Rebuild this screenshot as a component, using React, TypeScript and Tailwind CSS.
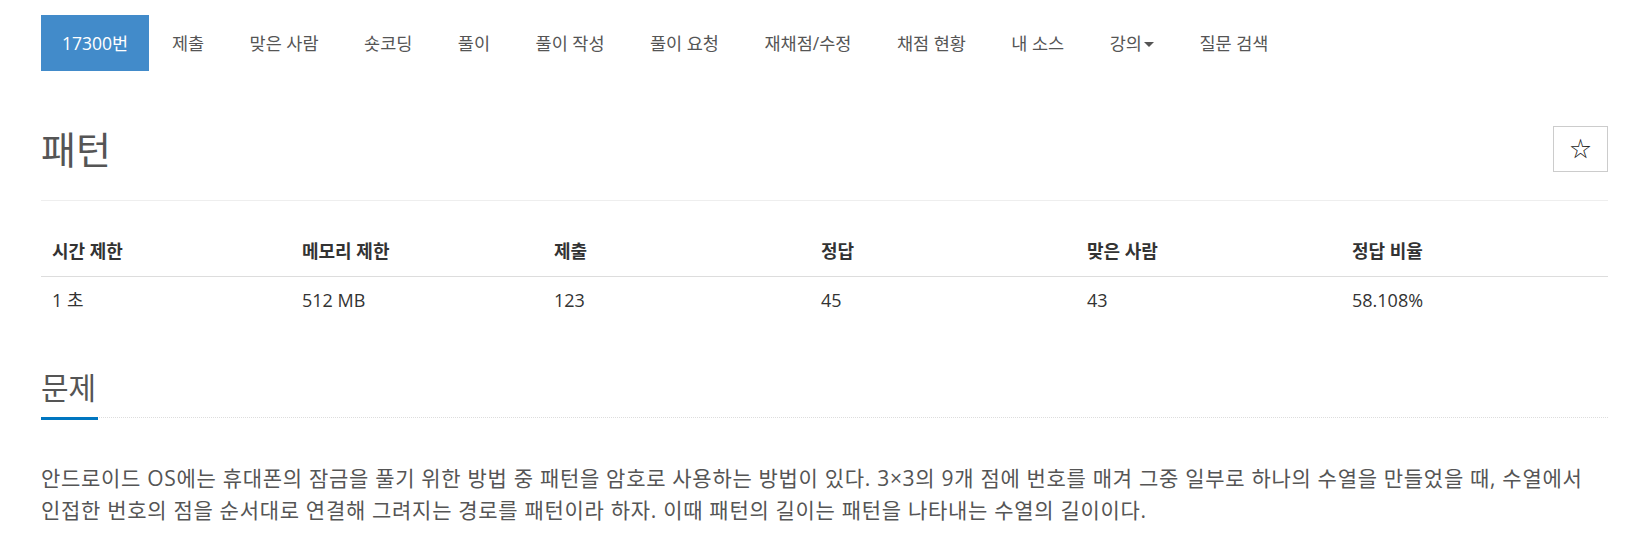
const navItems = ['제출', '맞은 사람', '숏코딩', '풀이', '풀이 작성', '풀이 요청', '재채점/수정', '채점 현황', '내 소스', '강의', '질문 검색'];

const headers = ['시간 제한', '메모리 제한', '제출', '정답', '맞은 사람', '정답 비율'];
const values = ['1 초', '512 MB', '123', '45', '43', '58.108%'];

export default function App() {
    return (
        <div className="min-h-[540px] bg-white pl-[41px] pr-[33px] pt-[15px] text-[#555] font-['Open_Sans','Noto_Sans_CJK_KR',sans-serif]">
            {/* 상단 메뉴 */}
            <ul className="flex h-[56px] items-stretch text-[17.5px]">
                <li className="flex items-center bg-[#428bca] px-[21px] text-white">17300번</li>
                {navItems.map((item) => (
                    <li key={item} className="flex items-center px-[22.75px]">
                        {item}
                        {item === '강의' && (
                            <span className="ml-[2px] mt-[2px] inline-block h-0 w-0 border-x-[5px] border-t-[5px] border-x-transparent border-t-[#555]" />
                        )}
                    </li>
                ))}
            </ul>

            {/* 문제 제목 */}
            <div className="flex items-center justify-between border-b border-[#eee] pb-[28px] pt-[55px]">
                <h1 className="text-[38px] leading-none text-[#555]">패턴</h1>
                <button type="button" className="flex h-[46px] w-[55px] items-center justify-center border border-[#ccc] text-[21px] text-[#222]">
                    ☆
                </button>
            </div>

            {/* 제한 정보 */}
            <div className="grid grid-cols-[250px_252px_267px_266px_265px_1fr] pt-[38px] text-[18px] text-[#333]">
                {headers.map((h) => (
                    <div key={h} className="border-b border-[#ddd] px-[11px] pb-[13px] font-bold leading-[24px]">
                        {h}
                    </div>
                ))}
                {values.map((v) => (
                    <div key={v} className="px-[11px] pt-[11px] leading-[24px]">
                        {v}
                    </div>
                ))}
            </div>

            {/* 문제 */}
            <div className="mt-[59px] border-b border-dotted border-[#ddd]">
                <h2 className="-mb-[3px] inline-block border-b-[3px] border-[#0076c0] pb-[12px] pr-[2px] text-[30px] leading-[34px] text-[#555]">문제</h2>
            </div>
            <p className="mt-[44px] break-keep text-[21px] leading-[32px] tracking-[0.7px] text-[#555]">
                안드로이드 OS에는 휴대폰의 잠금을 풀기 위한 방법 중 패턴을 암호로 사용하는 방법이 있다. 3×3의 9개 점에 번호를 매겨 그중 일부로 하나의 수열을 만들었을 때, 수열에서 인접한 번호의 점을 순서대로 연결해 그려지는 경로를 패턴이라 하자. 이때 패턴의 길이는 패턴을 나타내는 수열의 길이이다.
            </p>
        </div>
    );
}
